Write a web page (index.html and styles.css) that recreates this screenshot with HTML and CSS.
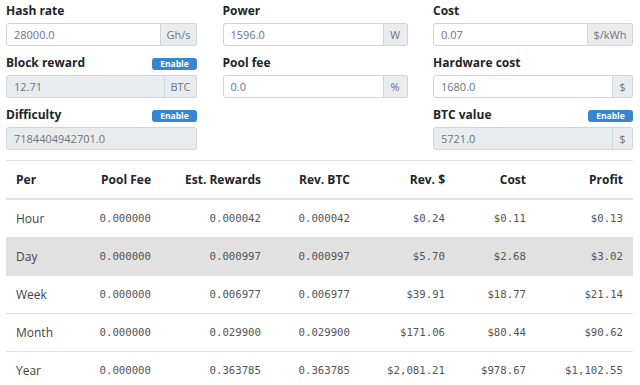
FILE: index.html
```html
<!DOCTYPE html>
<html lang="en">
<head>
  <meta charset="UTF-8" />
  <meta name="viewport" content="width=device-width, initial-scale=1.0" />
  <title>Mining Profit Calculator</title>
  <link rel="stylesheet" href="styles.css">
</head>
<body>
  <div class="form-grid">
    <div class="field">
      <div class="label-row"><label>Hash rate</label></div>
      <div class="input-group">
        <input type="text" value="28000.0" />
        <span class="addon addon-ghs">Gh/s</span>
      </div>
    </div>
    <div class="field">
      <div class="label-row"><label>Power</label></div>
      <div class="input-group">
        <input type="text" value="1596.0" />
        <span class="addon addon-w">W</span>
      </div>
    </div>
    <div class="field">
      <div class="label-row"><label>Cost</label></div>
      <div class="input-group">
        <input type="text" value="0.07" />
        <span class="addon addon-kwh">$/kWh</span>
      </div>
    </div>

    <div class="field">
      <div class="label-row"><label>Block reward</label><button class="badge">Enable</button></div>
      <div class="input-group">
        <input type="text" value="12.71" disabled />
        <span class="addon addon-btc">BTC</span>
      </div>
    </div>
    <div class="field">
      <div class="label-row"><label>Pool fee</label></div>
      <div class="input-group">
        <input type="text" value="0.0" />
        <span class="addon addon-w">%</span>
      </div>
    </div>
    <div class="field">
      <div class="label-row"><label>Hardware cost</label></div>
      <div class="input-group">
        <input type="text" value="1680.0" />
        <span class="addon addon-usd">$</span>
      </div>
    </div>

    <div class="field">
      <div class="label-row"><label>Difficulty</label><button class="badge">Enable</button></div>
      <div class="input-group">
        <input type="text" value="7184404942701.0" disabled />
      </div>
    </div>
    <div class="field"></div>
    <div class="field">
      <div class="label-row"><label>BTC value</label><button class="badge">Enable</button></div>
      <div class="input-group">
        <input type="text" value="5721.0" disabled />
        <span class="addon addon-usd">$</span>
      </div>
    </div>
  </div>

  <table class="results">
    <colgroup>
      <col style="width: 70px">
      <col style="width: 85px">
      <col style="width: 110px">
      <col style="width: 89px">
      <col style="width: 95px">
      <col style="width: 81px">
      <col style="width: 97px">
    </colgroup>
    <thead>
      <tr>
        <th class="left">Per</th>
        <th>Pool Fee</th>
        <th>Est. Rewards</th>
        <th>Rev. BTC</th>
        <th>Rev. $</th>
        <th>Cost</th>
        <th>Profit</th>
      </tr>
    </thead>
    <tbody>
      <tr>
        <td class="left">Hour</td>
        <td>0.000000</td><td>0.000042</td><td>0.000042</td>
        <td>$0.24</td><td>$0.11</td><td>$0.13</td>
      </tr>
      <tr class="active">
        <td class="left">Day</td>
        <td>0.000000</td><td>0.000997</td><td>0.000997</td>
        <td>$5.70</td><td>$2.68</td><td>$3.02</td>
      </tr>
      <tr>
        <td class="left">Week</td>
        <td>0.000000</td><td>0.006977</td><td>0.006977</td>
        <td>$39.91</td><td>$18.77</td><td>$21.14</td>
      </tr>
      <tr>
        <td class="left">Month</td>
        <td>0.000000</td><td>0.029900</td><td>0.029900</td>
        <td>$171.06</td><td>$80.44</td><td>$90.62</td>
      </tr>
      <tr>
        <td class="left">Year</td>
        <td>0.000000</td><td>0.363785</td><td>0.363785</td>
        <td>$2,081.21</td><td>$978.67</td><td>$1,102.55</td>
      </tr>
    </tbody>
  </table>
</body>
</html>
```

FILE: styles.css
```css
body {
  font-family: "Open Sans", "Noto Sans", Arial, sans-serif;
  color: #212529;
  margin: 0;
  padding: 0 7px 0 6px;
}

.form-grid {
  display: grid;
  grid-template-columns: repeat(3, 1fr);
  column-gap: 25.5px;
  row-gap: 6px;
}

.label-row {
  display: flex;
  align-items: center;
  justify-content: space-between;
  height: 21px;
  padding-bottom: 2px;
}

.label-row label {
  font-size: 12px;
  font-weight: 700;
}

.badge {
  width: 45px;
  height: 12px;
  padding: 0;
  border: none;
  border-radius: 3px;
  background-color: #3886cf;
  color: white;
  font-family: inherit;
  font-size: 8.5px;
  font-weight: 700;
  line-height: 12px;
  margin-top: 2px;
}

.input-group {
  display: flex;
  height: 23px;
}

.input-group input {
  flex: 1;
  min-width: 0;
  box-sizing: border-box;
  height: 23px;
  padding: 0 7px;
  border: 1px solid #ced4da;
  border-radius: 3px;
  font-family: inherit;
  font-size: 11px;
  color: #6c757d;
  background: white;
}

.input-group input:disabled {
  background: #e9ecef;
}

.input-group input:not(:last-child) {
  border-top-right-radius: 0;
  border-bottom-right-radius: 0;
}

.addon {
  box-sizing: border-box;
  display: flex;
  align-items: center;
  justify-content: center;
  height: 23px;
  border: 1px solid #ced4da;
  border-left: none;
  border-radius: 0 3px 3px 0;
  background: #e9ecef;
  font-size: 11px;
  color: #6c757d;
}

.addon-ghs { width: 36px; }
.addon-w { width: 24px; }
.addon-kwh { width: 45px; }
.addon-btc { width: 32px; }
.addon-usd { width: 20px; }

.results {
  width: 100%;
  margin-top: 10px;
  border-collapse: collapse;
  table-layout: fixed;
}

.results th,
.results td {
  text-align: right;
  padding: 0 10px;
  border-top: 1px solid #dee2e6;
  white-space: nowrap;
}

.results th {
  height: 37px;
  font-size: 12px;
  font-weight: 700;
  border-bottom: 2px solid #dee2e6;
}

.results td {
  height: 37px;
  font-family: "DejaVu Sans Mono", monospace;
  font-size: 10.7px;
  color: #555;
}

.results .left {
  text-align: left;
}

.results td.left {
  font-family: "Open Sans", "Noto Sans", Arial, sans-serif;
  font-size: 12px;
  color: #444;
}

.results tr.active td {
  background: #e1e1e1;
}
```
